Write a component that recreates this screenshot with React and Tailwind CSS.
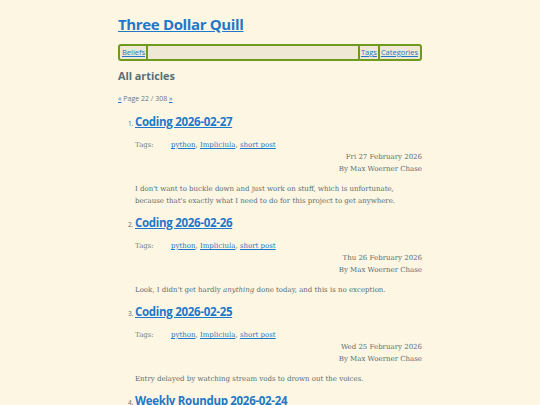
import React from "react";

const posts = [
  {
    n: 1,
    title: "Coding 2026-02-27",
    date: "Fri 27 February 2026",
    body: (
      <>
        I don't want to buckle down and just work on stuff, which is unfortunate, because that's
        exactly what I need to do for this project to get anywhere.
      </>
    ),
  },
  {
    n: 2,
    title: "Coding 2026-02-26",
    date: "Thu 26 February 2026",
    body: (
      <>
        Look, I didn't get hardly <em>anything</em> done today, and this is no exception.
      </>
    ),
  },
  {
    n: 3,
    title: "Coding 2026-02-25",
    date: "Wed 25 February 2026",
    body: <>Entry delayed by watching stream vods to drown out the voices.</>,
  },
  {
    n: 4,
    title: "Weekly Roundup 2026-02-24",
    date: "Tue 24 February 2026",
    body: <>Nothing much this week.</>,
  },
];

const sans = "font-['Open_Sans','Noto_Sans',sans-serif]";
const serif = "font-['DejaVu_Serif','Liberation_Serif',serif]";
const link = "text-[#1f78c8] underline";

const App = () => {
  return (
    <div className="h-[405px] bg-[#fdf6e3] overflow-hidden">
      <div className="mx-auto w-[304px] pt-[14px]">
        {/* Site title */}
        <h1 className={`${sans} text-[15px] leading-[21px] font-bold tracking-[-0.35px]`}>
          <a href="#" className={link}>Three Dollar Quill</a>
        </h1>

        {/* Nav */}
        <nav
          className={`${sans} mt-[9px] flex h-[17px] items-stretch rounded-[3px] border-2 border-[#6f9a1e] bg-[#eee8d5] text-[7.5px] leading-[13px]`}
        >
          <a href="#" className={`${link} border-r-2 border-[#6f9a1e] pl-[2px] pr-[1px]`}>Beliefs</a>
          <div className="flex-1"></div>
          <a href="#" className={`${link} border-l-2 border-r-2 border-[#6f9a1e] px-[1px]`}>Tags</a>
          <a href="#" className={`${link} pl-[1px] pr-[2px]`}>Categories</a>
        </nav>

        <h2 className={`${sans} mt-[7px] text-[10.8px] leading-[16px] font-bold text-[#586e75]`}>All articles</h2>

        <p className={`${sans} mt-[10px] text-[7px] leading-[10px] text-[#657b83]`}>
          <a href="#" className={link}>«</a> Page 22 / 308{" "}
          <a href="#" className={link}>»</a>
        </p>

        {/* Articles */}
        <ol className="mt-[10px] list-decimal pl-[17px] marker:text-[6.5px] marker:text-[#586e75]">
          {posts.map((p) => (
            <li key={p.n} className={`${sans} mb-[8px]`}>
              <h3 className="text-[11.5px] leading-[16px] font-bold tracking-[-0.3px]">
                <a href="#" className={link}>{p.title}</a>
              </h3>
              <div className={`${serif} mt-[9px] flex text-[7px] leading-[12px]`}>
                <span className="w-[36px] text-[#6f8389]">Tags:</span>
                <span className="text-[#586e75]">
                  <a href="#" className={link}>python</a>,{" "}
                  <a href="#" className={link}>Impliciula</a>,{" "}
                  <a href="#" className={link}>short post</a>
                </span>
              </div>
              <div className={`${serif} text-right text-[7px] leading-[12px] text-[#586e75]`}>
                <p>{p.date}</p>
                <p>By Max Woerner Chase</p>
              </div>
              <p className={`${serif} mt-[8px] text-[7px] leading-[12px] text-[#586e75]`}>{p.body}</p>
            </li>
          ))}
        </ol>
      </div>
    </div>
  );
};

export default App;
